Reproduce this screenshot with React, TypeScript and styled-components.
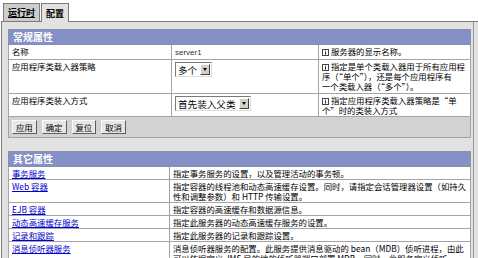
import React from "react";
import styled, { createGlobalStyle } from "styled-components";

const GlobalStyle = createGlobalStyle`
  html, body {
    margin: 0;
    padding: 0;
    background: #fff;
  }
  body {
    font-family: "Noto Sans CJK SC", "Liberation Sans", sans-serif;
    font-size: 8.4px;
    color: #000;
  }
`;

const Page = styled.div`
  width: 478px;
  height: 258px;
  overflow: hidden;
`;

const TabBar = styled.div`
  display: flex;
  align-items: flex-end;
  height: 21px;
  padding-left: 3px;
  gap: 1px;
`;

const Tab = styled.div<{ $active?: boolean }>`
  position: relative;
  z-index: 1;
  height: ${(p) => (p.$active ? 19 : 18)}px;
  margin-bottom: ${(p) => (p.$active ? -1 : 0)}px;
  box-sizing: border-box;
  padding: 0 4px;
  display: flex;
  align-items: center;
  border: 1px solid #7c7c7c;
  border-bottom: none;
  background: ${(p) => (p.$active ? "#e2e2e2" : "#cdcdcd")};
  font-size: 9px;
  font-weight: bold;
  text-decoration: ${(p) => (p.$active ? "none" : "underline")};
`;

const Panel = styled.div`
  display: flex;
  min-height: 240px;
  margin-left: 1px;
  padding-right: 4px;
  background: #e2e2e2;
  border-top: 1px solid #7c7c7c;
  border-left: 1px solid #7c7c7c;
`;

const Content = styled.div`
  flex: 1;
  padding: 7px 2px 0 6px;
  border-right: 1px solid #9a9a9a;
`;

const Table = styled.table<{ $gap?: number }>`
  width: 100%;
  margin-top: ${(p) => p.$gap || 0}px;
  border-collapse: collapse;
  table-layout: fixed;
  background: #fff;
`;

const Col = styled.col<{ $w: number }>`
  width: ${(p) => p.$w}px;
`;

const Header = styled.th`
  height: 14px;
  padding: 0 4px;
  background: #8590c6;
  border: 1px solid #8a8fa8;
  color: #fff;
  font-size: 10px;
  font-weight: bold;
  text-align: left;
  line-height: 14px;
`;

const Row = styled.tr<{ $h?: number }>`
  height: ${(p) => (p.$h ? `${p.$h}px` : "auto")};
`;

const Cell = styled.td<{ $nowrap?: boolean }>`
  padding: 1px 3px 1px;
  vertical-align: top;
  border: 1px solid #a4a4a4;
  line-height: 10px;
  white-space: ${(p) => (p.$nowrap ? "nowrap" : "normal")};
`;

const Plain = styled.span`
  font-family: "Liberation Sans", sans-serif;
  font-size: 8px;
  color: #333;
`;

const InfoSvg = styled.svg`
  width: 7px;
  height: 7px;
  margin-right: 2px;
  vertical-align: -0.5px;
`;

const InfoIcon = () => (
  <InfoSvg viewBox="0 0 7 7">
    <rect x="0.5" y="0.5" width="6" height="6" fill="#fff" stroke="#444" />
    <rect x="3" y="1.6" width="1" height="1" fill="#222" />
    <rect x="3" y="3" width="1" height="2.6" fill="#222" />
  </InfoSvg>
);

const SelectBox = styled.div`
  display: inline-flex;
  align-items: center;
  box-sizing: border-box;
  height: 15px;
  margin-top: 1px;
  padding-left: 2px;
  background: #fff;
  border: 1px solid;
  border-color: #7a7a7a #dcdcdc #dcdcdc #7a7a7a;
  font-size: 9.6px;
  line-height: 12px;
`;

const SelectArrow = styled.span`
  display: flex;
  align-items: center;
  justify-content: center;
  box-sizing: border-box;
  width: 10px;
  height: 11px;
  margin: 0 1px 0 3px;
  background: #d4d0c8;
  border: 1px solid;
  border-color: #fff #404040 #404040 #fff;

  &::after {
    content: "";
    border-left: 2.5px solid transparent;
    border-right: 2.5px solid transparent;
    border-top: 3px solid #000;
  }
`;

const ButtonCell = styled.td`
  height: 14px;
  padding: 3px 3px;
  background: #d2d2d2;
  border: 1px solid #a4a4a4;
`;

const ButtonRow = styled.div`
  display: flex;
  gap: 5px;
`;

const Button = styled.button`
  height: 14px;
  padding: 0 3px;
  background: #e6e6e6;
  border: 1px solid;
  border-color: #fafafa #5e5e5e #5e5e5e #fafafa;
  font-family: inherit;
  font-size: 8.4px;
  line-height: 11px;
  color: #000;
`;

const Link = styled.a`
  color: #0000cc;
  text-decoration: underline;
`;

const Select = ({ value }: { value: string }) => (
  <SelectBox>
    {value}
    <SelectArrow />
  </SelectBox>
);

const others: { name: string; desc: React.ReactNode }[] = [
  { name: "事务服务", desc: "指定事务服务的设置，以及管理活动的事务顿。" },
  {
    name: "Web 容器",
    desc: (
      <>
        指定容器的线程池和动态高速缓存设置。同时，请指定会话管理器设置（如持久
        <br />
        性和调整参数）和 HTTP 传输设置。
      </>
    ),
  },
  { name: "EJB 容器", desc: "指定容器的高速缓存和数据源信息。" },
  { name: "动态高速缓存服务", desc: "指定此服务器的动态高速缓存服务的设置。" },
  { name: "记录和跟踪", desc: "指定此服务器的记录和跟踪设置。" },
  {
    name: "消息侦听器服务",
    desc: (
      <>
        消息侦听器服务的配置。此服务提供消息驱动的 bean（MDB）侦听进程，由此
        <br />
        可以依据定义 JMS 目的地的侦听器端口部署 MDB。同时，此服务定义侦听
      </>
    ),
  },
];

export default function App() {
  return (
    <Page>
      <GlobalStyle />
      <TabBar>
        <Tab>运行时</Tab>
        <Tab $active>配置</Tab>
      </TabBar>
      <Panel>
        <Content>
          <Table>
            <colgroup>
              <Col $w={163} />
              <Col $w={147} />
              <Col $w={152} />
            </colgroup>
            <thead>
              <tr>
                <Header colSpan={3}>常规属性</Header>
              </tr>
            </thead>
            <tbody>
              <Row $h={14}>
                <Cell>名称</Cell>
                <Cell>
                  <Plain>server1</Plain>
                </Cell>
                <Cell>
                  <InfoIcon />
                  服务器的显示名称。
                </Cell>
              </Row>
              <Row $h={34}>
                <Cell>应用程序类载入器策略</Cell>
                <Cell>
                  <Select value="多个" />
                </Cell>
                <Cell $nowrap>
                  <InfoIcon />
                  指定是单个类载入器用于所有应用程
                  <br />
                  序（“单个”），还是每个应用程序有
                  <br />
                  一个类载入器（“多个”）。
                </Cell>
              </Row>
              <Row $h={23}>
                <Cell>应用程序类装入方式</Cell>
                <Cell>
                  <Select value="首先装入父类" />
                </Cell>
                <Cell $nowrap>
                  <InfoIcon />
                  指定应用程序类载入器策略是“单
                  <br />
                  个”时的类装入方式
                </Cell>
              </Row>
              <tr>
                <ButtonCell colSpan={3}>
                  <ButtonRow>
                    <Button>应用</Button>
                    <Button>确定</Button>
                    <Button>复位</Button>
                    <Button>取消</Button>
                  </ButtonRow>
                </ButtonCell>
              </tr>
            </tbody>
          </Table>

          <Table $gap={13}>
            <colgroup>
              <Col $w={161} />
              <Col $w={301} />
            </colgroup>
            <thead>
              <tr>
                <Header colSpan={2}>其它属性</Header>
              </tr>
            </thead>
            <tbody>
              {others.map((o) => (
                <Row key={o.name}>
                  <Cell>
                    <Link href="#">{o.name}</Link>
                  </Cell>
                  <Cell $nowrap>{o.desc}</Cell>
                </Row>
              ))}
            </tbody>
          </Table>
        </Content>
      </Panel>
    </Page>
  );
}
